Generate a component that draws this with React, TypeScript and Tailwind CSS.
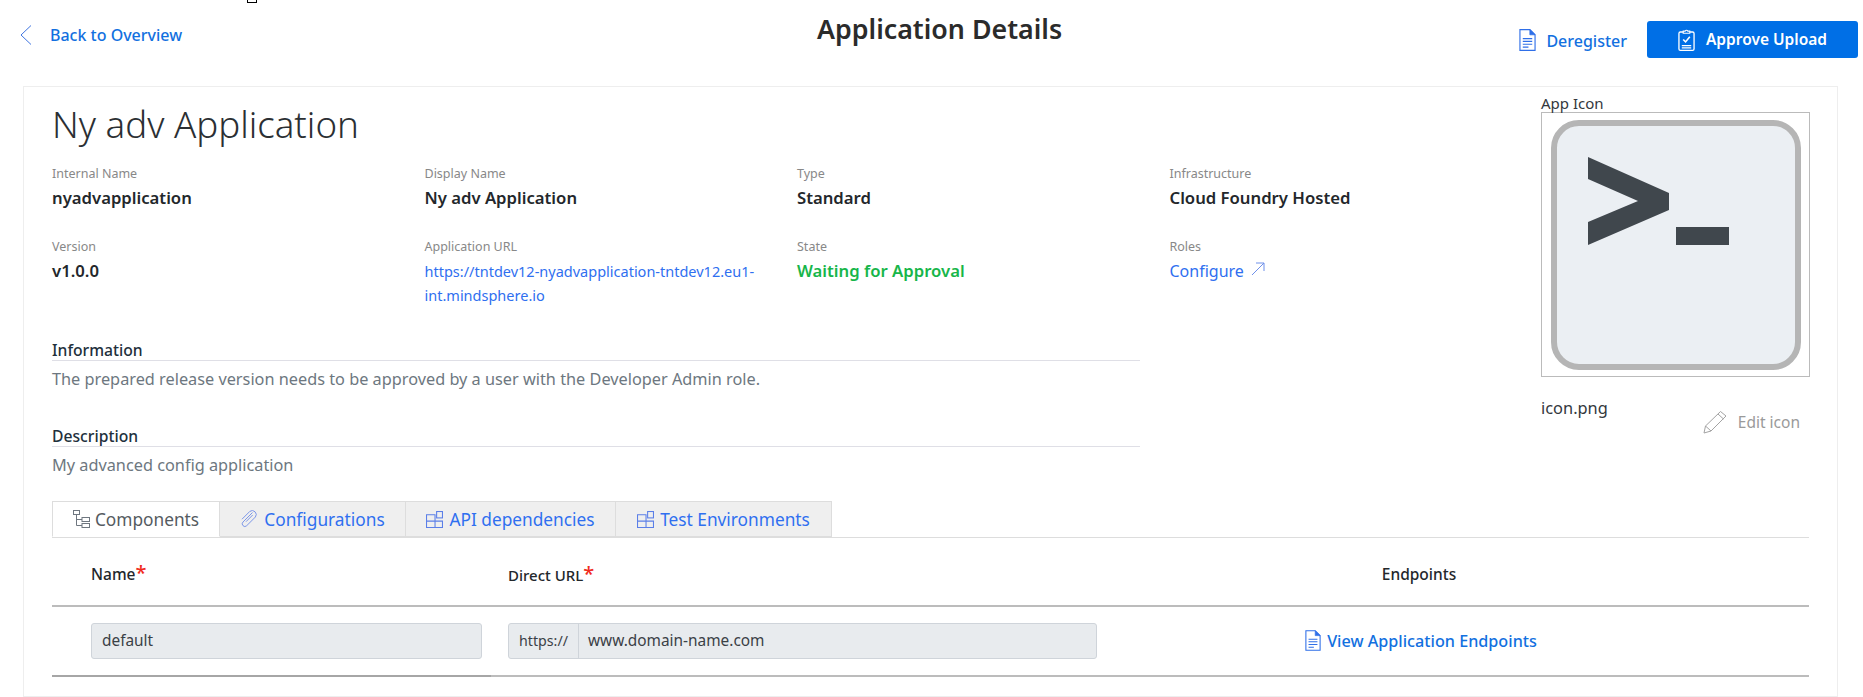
const F = "[font-family:'Noto_Sans',sans-serif]";

function DocIcon({ className }: { className: string }) {
  return (
    <svg viewBox="0 0 18 24" fill="none" stroke="currentColor" className={className}>
      <path d="M1 1H11.5L17 6.5V23H1Z" strokeWidth="1.2" />
      <path d="M11.5 1V6.5H17Z" fill="currentColor" strokeWidth="0.8" />
      <path d="M4 10.5H14M4 13.5H14M4 16.5H14M4 19.5H10" strokeWidth="1.2" />
    </svg>
  );
}

function ClipboardIcon() {
  return (
    <svg viewBox="0 0 18 24" fill="none" stroke="white" className="w-[17px] h-[24px]">
      <path d="M5.5 3.5H2.5A1.5 1.5 0 0 0 1 5V21.5A1.5 1.5 0 0 0 2.5 23H15.5A1.5 1.5 0 0 0 17 21.5V5A1.5 1.5 0 0 0 15.5 3.5H12.5" strokeWidth="1.4" />
      <path d="M5.5 4.8V2.6H7.6A1.5 1.5 0 0 1 10.4 2.6H12.5V4.8Z" strokeWidth="1.2" />
      <path d="M5.5 11.5L8 14L12.5 8.5" strokeWidth="1.7" />
      <path d="M4 18H14M4 20.4H14" strokeWidth="1.3" />
    </svg>
  );
}

function TreeIcon() {
  return (
    <svg viewBox="0 0 18 18" fill="none" stroke="#6f7780" strokeWidth="1" className="w-[18px] h-[18px]">
      <rect x="0.5" y="0.5" width="6" height="4" />
      <path d="M3.5 4.5V15.5H9M3.5 9.5H9" />
      <rect x="9" y="7.5" width="7.5" height="4" />
      <rect x="9" y="13.5" width="7.5" height="4" />
    </svg>
  );
}

function BlocksIcon() {
  return (
    <svg viewBox="0 0 16 16" fill="none" stroke="#5b7fe8" strokeWidth="1" className="w-[17px] h-[17px]">
      <path d="M0.5 3.5H8.5V15.5H0.5ZM0.5 9.5H15.5V15.5H8.5" />
      <rect x="10" y="0.5" width="5.5" height="6" />
    </svg>
  );
}

function ClipIcon() {
  return (
    <svg viewBox="0 0 18 18" fill="none" stroke="#7d97e8" strokeWidth="1" className="w-[18px] h-[18px]">
      <path d="M12.5 2.5L3 12a2.6 2.6 0 0 0 3.7 3.7L15.4 7a4 4 0 0 0-5.6-5.6L2 9.2" />
      <path d="M12.7 5L6 11.7" />
    </svg>
  );
}

function Field({ label, children }: { label: string; children: React.ReactNode }) {
  return (
    <div className="h-[73px]">
      <div className="text-[12.5px] leading-[16px] text-[#888888]">{label}</div>
      <div className="mt-[4px]">{children}</div>
    </div>
  );
}

const strong = "text-[16.7px] leading-[24px] font-semibold";

function Tab({ label, icon, w, active }: { label: string; icon: React.ReactNode; w: string; active?: boolean }) {
  return (
    <div
      className={`${w} h-[36px] flex items-center justify-center border border-[#dddddd] text-[17.3px] ${
        active ? "gap-[4px] bg-white text-[#555b61] border-b-white relative z-10" : "gap-[6px] bg-[#efefef] text-[#2f6ff0] border-l-0"
      }`}
    >
      {icon}
      <span className="mt-[2px]">{label}</span>
    </div>
  );
}

export default function App() {
  return (
    <div className={`relative w-[1863px] h-[697px] overflow-hidden bg-white ${F}`}>
      <div className="absolute left-[247px] top-0 w-[10px] h-[3px] border border-t-0 border-black" />

      <header className="flex h-[86px] items-start">
        <div className="w-[817px] pl-[20px] pt-[25px] flex items-center">
          <svg viewBox="0 0 12 20" fill="none" stroke="#3f74e0" strokeWidth="1" className="w-[12px] h-[20px]">
            <path d="M11 0.5L1 10L11 19.5" />
          </svg>
          <span className="ml-[18px] text-[16px] font-medium leading-[20px] text-[#1270e0]">Back to Overview</span>
        </div>
        <h1 className="pt-[12px] text-[26.8px] leading-[34px] font-semibold text-[#2b2b2b]">Application Details</h1>
        <div className="ml-auto pr-[5px] pt-[21px] flex items-center">
          <DocIcon className="w-[17px] h-[24px] text-[#2f6fe8]" />
          <span className="ml-[10px] mt-[2px] text-[16px] font-medium text-[#1270e0]">Deregister</span>
          <button className="ml-[20px] w-[211px] h-[37px] rounded-[3px] bg-[#006fe6] text-white flex items-center justify-center gap-[11px] text-[15.5px] font-semibold">
            <ClipboardIcon />
            <span className="mt-[1px]">Approve Upload</span>
          </button>
        </div>
      </header>

      <main className="ml-[23px] w-[1815px] h-[611px] border border-[#eeeeee] pl-[28px]">
        <div className="flex">
          <div className="w-[1489px]">
            <h2 className="pt-[14px] text-[36.7px] leading-[46px] font-light text-[#2b2f33]">Ny adv Application</h2>
            <div className="mt-[19px] grid grid-cols-[372.5px_372.5px_372.5px_1fr]">
              <Field label="Internal Name"><div className={`${strong} text-[#23272b]`}>nyadvapplication</div></Field>
              <Field label="Display Name"><div className={`${strong} text-[#23272b]`}>Ny adv Application</div></Field>
              <Field label="Type"><div className={`${strong} text-[#23272b]`}>Standard</div></Field>
              <Field label="Infrastructure"><div className={`${strong} text-[#23272b]`}>Cloud Foundry Hosted</div></Field>
              <Field label="Version"><div className={`${strong} text-[#23272b]`}>v1.0.0</div></Field>
              <Field label="Application URL">
                <div className="w-[345px] text-[14.5px] leading-[24px] text-[#2f6ff0]">
                  https://tntdev12-nyadvapplication-tntdev12.eu1-int.mindsphere.io
                </div>
              </Field>
              <Field label="State"><div className={`${strong} text-[#17b64a]`}>Waiting for Approval</div></Field>
              <Field label="Roles">
                <div className="flex items-center gap-[7px] text-[16px] leading-[24px] text-[#2f6ff0]">
                  Configure
                  <svg viewBox="0 0 14 14" fill="none" stroke="#6f90ea" strokeWidth="1" className="w-[14px] h-[14px] mb-[4px]">
                    <path d="M1 13L13 1M5 1H13V9" />
                  </svg>
                </div>
              </Field>
            </div>
            <div className="w-[1088px] mt-[28px]">
              <div className="h-[20px] leading-[20px] text-[15.7px] font-medium text-[#22303c] border-b border-[#dfdfe6] box-content">Information</div>
              <p className="mt-[8px] text-[16.3px] leading-[20px] text-[#6d7780]">The prepared release version needs to be approved by a user with the Developer Admin role.</p>
              <div className="mt-[37px] h-[20px] leading-[20px] text-[15.7px] font-medium text-[#22303c] border-b border-[#dfdfe6] box-content">Description</div>
              <p className="mt-[8px] text-[16.3px] leading-[20px] text-[#6d7780]">My advanced config application</p>
            </div>
          </div>
          <aside className="w-[270px] pt-[7px]">
            <div className="text-[15px] leading-[18px] text-[#33383d]">App Icon</div>
            <div className="w-[269px] h-[265px] border border-[#bbbbbb] flex items-center justify-center">
              <svg viewBox="0 0 250 250" className="w-[250px] h-[250px]">
                <rect x="3" y="3" width="244" height="244" rx="25" fill="#ebeff3" stroke="#b5b5b5" strokeWidth="6" />
                <path d="M37 37L118 73V90L37 125V102L87 81L37 59Z" fill="#40474d" />
                <rect x="125" y="107" width="53" height="18" fill="#40474d" />
              </svg>
            </div>
            <div className="flex h-[60px]">
              <div className="mt-[20px] text-[16.4px] leading-[22px] text-[#33383d]">icon.png</div>
              <div className="ml-auto mr-[11px] mt-[33px] flex items-center gap-[11px] h-[24px] text-[15.5px] text-[#9a9a9a]">
                <svg viewBox="0 0 24 24" fill="none" stroke="#a3a3a3" strokeWidth="1" className="w-[24px] h-[24px]">
                  <path d="M1 23L2.5 16L17.5 1.5L23 6L8 21Z M15 4L20.5 9 M2.5 16L8 21" />
                </svg>
                <span className="mt-[2px]">Edit icon</span>
              </div>
            </div>
          </aside>
        </div>

        <div className="w-[1757px] mt-[26px]">
          <div className="flex border-b border-[#dddddd] h-[36px] box-content">
            <Tab label="Components" icon={<TreeIcon />} w="w-[168px]" active />
            <Tab label="Configurations" icon={<ClipIcon />} w="w-[186px]" />
            <Tab label="API dependencies" icon={<BlocksIcon />} w="w-[210px]" />
            <Tab label="Test Environments" icon={<BlocksIcon />} w="w-[216px]" />
          </div>
          <div className="grid grid-cols-[456px_589px_1fr] h-[69px] pt-[7px] items-center border-b-2 border-[#bcbcbc] text-[15.5px] font-medium text-[#23272b]">
            <div className="pl-[39px] flex items-start">Name<span className="text-[#f02b1d] text-[20px] leading-[20px]">*</span></div>
            <div className="flex items-start text-[15px]">Direct URL<span className="text-[#f02b1d] text-[20px] leading-[20px]">*</span></div>
            <div className="text-center pr-[68px]">Endpoints</div>
          </div>
          <div className="relative grid grid-cols-[456px_589px_1fr] h-[70px] items-center border-b-2 border-[#bcbcbc] text-[15.4px]">
            <div className="absolute left-0 bottom-[-2px] w-[439px] h-[2px] bg-[#a6a6a6]" />
            <div className="pl-[39px]">
              <div className="w-[391px] h-[36px] px-[10px] rounded-[3px] border border-[#cfd4da] bg-[#e8ebee] leading-[34px] text-[#3a4046]">default</div>
            </div>
            <div className="flex h-[36px] rounded-[3px] border border-[#cfd4da] bg-[#e8ebee] leading-[34px] text-[#3a4046]">
              <div className="w-[70px] text-center text-[14.2px] border-r border-[#cfd4da]">https://</div>
              <div className="pl-[9px]">www.domain-name.com</div>
            </div>
            <div className="flex items-center justify-center gap-[6px] pr-[64px] text-[16.2px] font-medium text-[#1270e0]">
              <DocIcon className="w-[16px] h-[23px] text-[#2f6fe8]" />
              View Application Endpoints
            </div>
          </div>
        </div>
      </main>
    </div>
  );
}
